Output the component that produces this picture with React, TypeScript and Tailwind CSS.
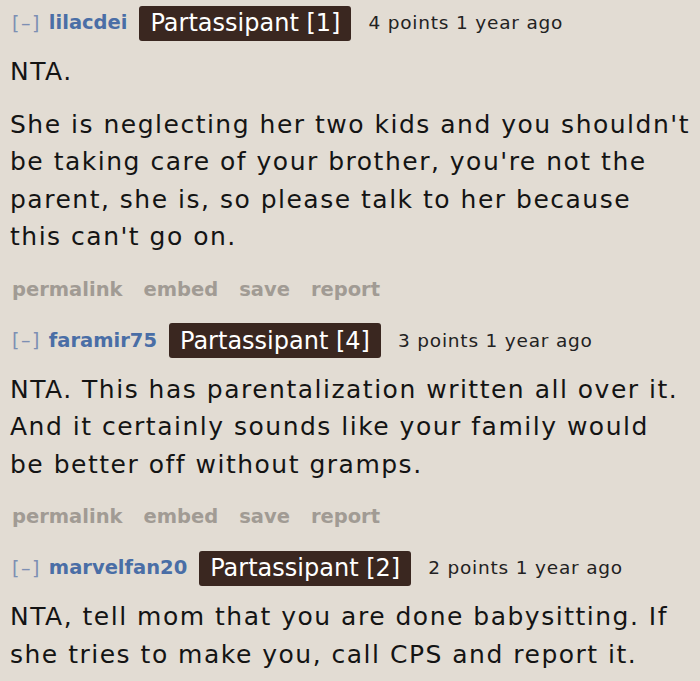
const COMMENTS = [
  {
    user: "lilacdei",
    flair: "Partassipant [1]",
    points: "4 points",
    paragraphs: [
      ["NTA."],
      [
        "She is neglecting her two kids and you shouldn't",
        "be taking care of your brother, you're not the",
        "parent, she is, so please talk to her because",
        "this can't go on.",
      ],
    ],
  },
  {
    user: "faramir75",
    flair: "Partassipant [4]",
    points: "3 points",
    paragraphs: [
      [
        "NTA. This has parentalization written all over it.",
        "And it certainly sounds like your family would",
        "be better off without gramps.",
      ],
    ],
  },
  {
    user: "marvelfan20",
    flair: "Partassipant [2]",
    points: "2 points",
    paragraphs: [
      [
        "NTA, tell mom that you are done babysitting. If",
        "she tries to make you, call CPS and report it.",
      ],
    ],
  },
];

function Comment({ c, last }: { c: (typeof COMMENTS)[number]; last: boolean }) {
  return (
    <div className="pb-[21px]">
      <div className="flex items-center h-[36px] pl-[2px]">
        <span className="text-[19px] text-[#7d8fb3] tracking-[1.5px]">[–]</span>
        <span className="ml-[8px] text-[19.5px] font-bold text-[#4a6ea6]">{c.user}</span>
        <span className="ml-[12px] rounded-[3px] bg-[#3a2720] px-[11px] h-[35px] flex items-center text-[24px] text-white">
          {c.flair}
        </span>
        <span className="ml-[17px] text-[18.5px] tracking-[0.8px] text-[#222]">{c.points} 1 year ago</span>
      </div>
      <div className="mt-[12px] whitespace-nowrap text-[25px] tracking-[1.5px] leading-[37.5px] text-[#141414]">
        {c.paragraphs.map((lines, i) => (
          <p key={i} className={i > 0 ? "mt-[15px]" : ""}>
            {lines.map((l, j) => (
              <span key={j} className="block">
                {l}
              </span>
            ))}
          </p>
        ))}
      </div>
      {!last && (
        <div className="mt-[22px] flex gap-[21px] pl-[2px] text-[19.5px] font-bold text-[#a19b94] leading-[24px]">
          <span>permalink</span>
          <span>embed</span>
          <span>save</span>
          <span>report</span>
        </div>
      )}
    </div>
  );
}

export default function App() {
  return (
    <div
      className="min-h-[681px] bg-[#e2dcd3] pl-[10px] pt-[5px] overflow-hidden"
      style={{ fontFamily: '"DejaVu Sans", Verdana, sans-serif' }}
    >
      {COMMENTS.map((c, i) => (
        <Comment key={c.user} c={c} last={i === COMMENTS.length - 1} />
      ))}
    </div>
  );
}
